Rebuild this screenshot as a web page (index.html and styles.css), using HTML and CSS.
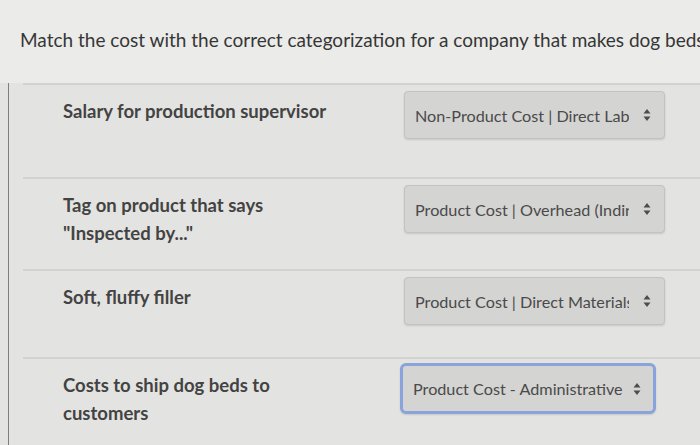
FILE: index.html
```html
<!DOCTYPE html>
<html lang="en">
<head>
  <meta charset="UTF-8">
  <title>Match the cost</title>
  <link rel="stylesheet" href="styles.css">
</head>
<body>
  <!-- Question heading -->
  <div class="question">
    <p>Match the cost with the correct categorization for a company that makes dog beds</p>
  </div>

  <!-- Matching rows -->
  <div class="sheet">
    <div class="row">
      <div class="term">Salary for production supervisor</div>
      <div class="picker">
        <span class="value clip">Non-Product Cost | Direct Labor</span>
        <svg class="arrows" width="8" height="14" viewBox="0 0 8 14"><path d="M4 1 L7.5 5.5 H0.5 Z M4 13 L7.5 8.5 H0.5 Z" fill="#4d4d4d"/></svg>
      </div>
    </div>

    <div class="row">
      <div class="term">Tag on product that says<br>"Inspected by..."</div>
      <div class="picker">
        <span class="value clip">Product Cost | Overhead (Indirect)</span>
        <svg class="arrows" width="8" height="14" viewBox="0 0 8 14"><path d="M4 1 L7.5 5.5 H0.5 Z M4 13 L7.5 8.5 H0.5 Z" fill="#4d4d4d"/></svg>
      </div>
    </div>

    <div class="row">
      <div class="term">Soft, fluffy filler</div>
      <div class="picker">
        <span class="value clip">Product Cost | Direct Materials</span>
        <svg class="arrows" width="8" height="14" viewBox="0 0 8 14"><path d="M4 1 L7.5 5.5 H0.5 Z M4 13 L7.5 8.5 H0.5 Z" fill="#4d4d4d"/></svg>
      </div>
    </div>

    <div class="row">
      <div class="term">Costs to ship dog beds to<br>customers</div>
      <div class="picker focused">
        <span class="value">Product Cost - Administrative</span>
        <svg class="arrows" width="8" height="14" viewBox="0 0 8 14"><path d="M4 1 L7.5 5.5 H0.5 Z M4 13 L7.5 8.5 H0.5 Z" fill="#4d4d4d"/></svg>
      </div>
    </div>
  </div>
</body>
</html>
```

FILE: styles.css
```css
body {
  margin: 0;
  font-family: Lato, "Open Sans", sans-serif;
  background-color: #e3e3e1;
  color: #3b3b3b;
  height: 445px;
  overflow: hidden;
}

/* Heading strip */
.question {
  height: 83px;
  background-color: #ebebe9;
  display: flex;
  align-items: center;
  padding-left: 20px;
  white-space: nowrap;
  overflow: hidden;
}

.question p {
  margin: 0 0 4px;
  font-size: 19px;
  color: #363636;
}

/* Rows */
.sheet {
  margin-left: 8px;
  border-left: 1px solid #7f7f7d;
  padding-left: 14px;
  height: 362px;
}

.row {
  display: flex;
  align-items: flex-start;
  border-top: 2px solid #d2d2cf;
  padding-top: 6px;
  height: 84px;
}

.row:first-child {
  height: 86px;
}

.row:nth-child(3) {
  height: 80px;
}

.term {
  width: 341px;
  padding-left: 40px;
  padding-top: 6px;
  font-size: 18.5px;
  font-weight: 700;
  line-height: 28px;
  color: #434343;
}

.picker {
  width: 261px;
  height: 48px;
  box-sizing: border-box;
  display: flex;
  align-items: center;
  justify-content: space-between;
  padding: 0 13px 0 10px;
  background-color: #d4d4d2;
  border: 1px solid #c2c2c0;
  border-radius: 4px;
  box-shadow: 0 1px 2px rgba(0, 0, 0, 0.12);
  font-size: 16.2px;
  color: #4a4a4a;
}

.value {
  white-space: nowrap;
  overflow: hidden;
}

.value.clip {
  width: 214px;
}

.arrows {
  flex-shrink: 0;
}

.picker.focused {
  width: 256px;
  border: 3px solid #8aa3dc;
  border-radius: 6px;
  height: 51px;
  margin-top: -2px;
  margin-left: -4px;
  padding-right: 12px;
}
```
